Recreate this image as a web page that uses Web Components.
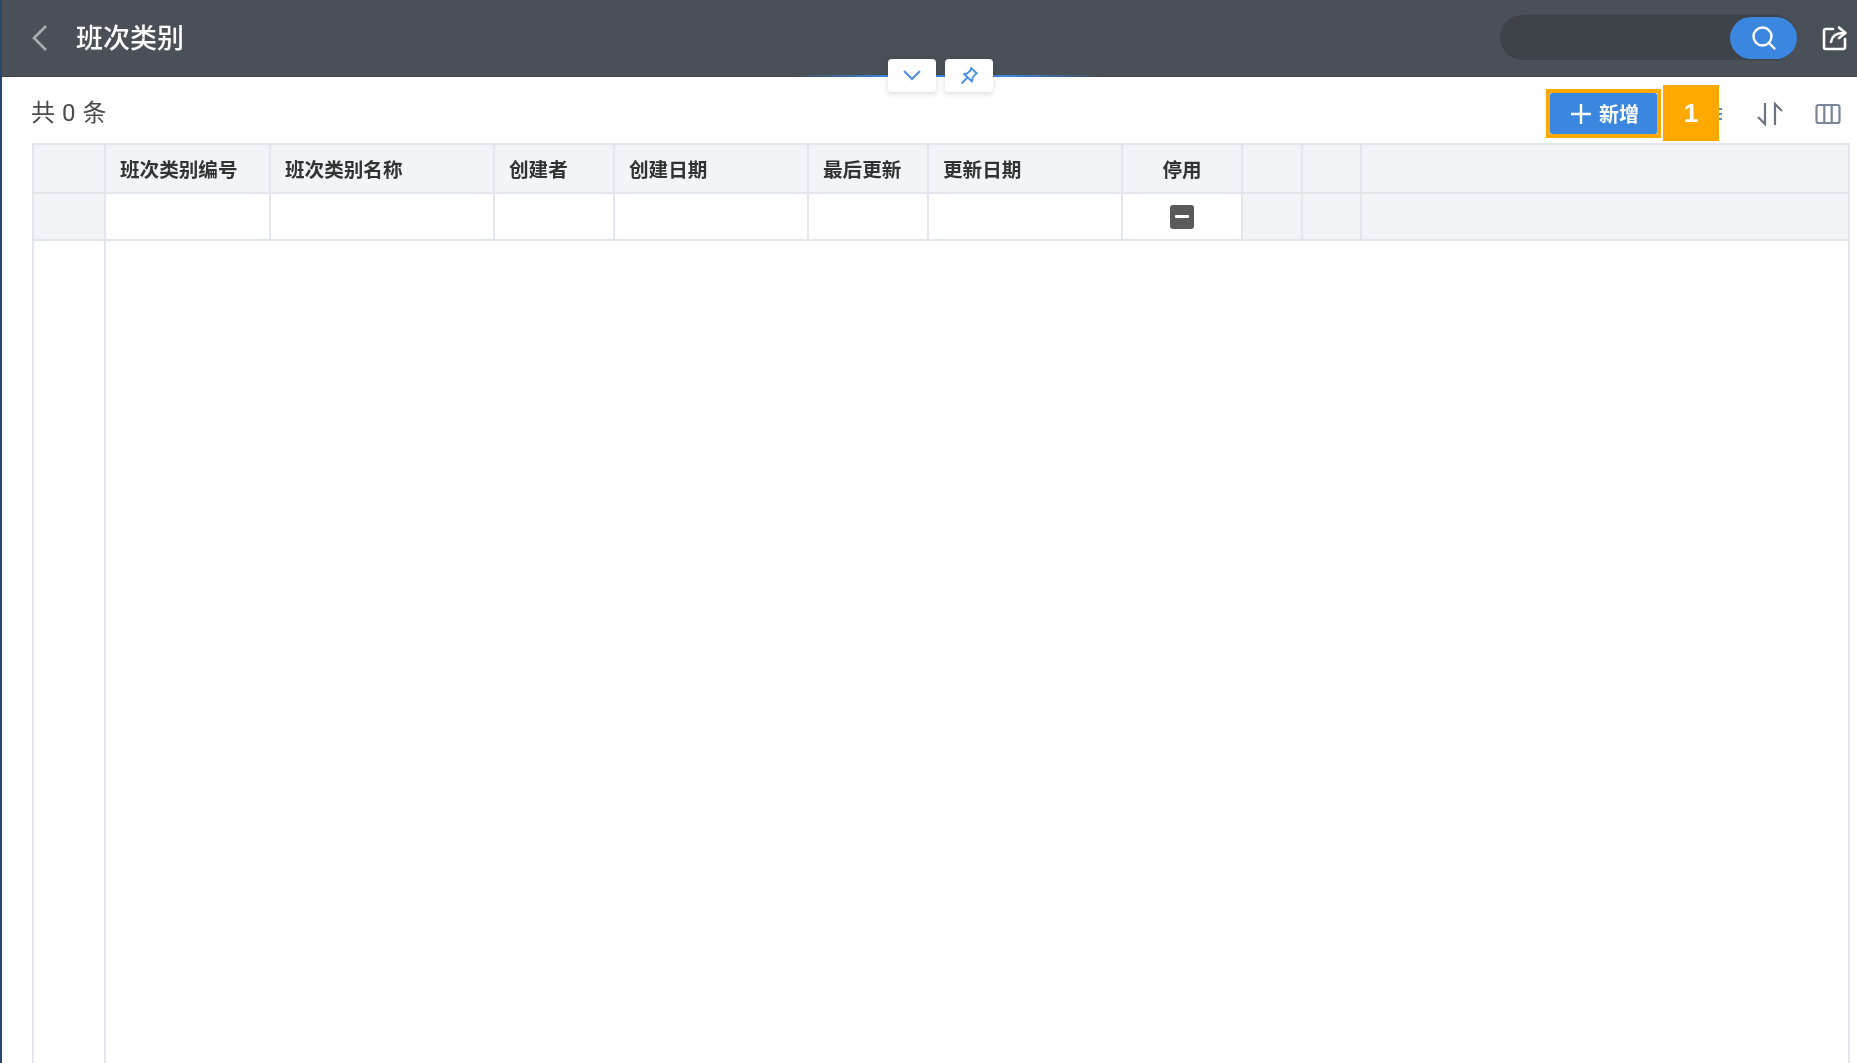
<!DOCTYPE html>
<html lang="zh">
<head>
<meta charset="utf-8">
<title>班次类别</title>
<style>
  html, body { margin: 0; height: 100%; overflow: hidden; background: #fff; }
  body { font-family: "Roboto", "Noto Sans CJK SC", sans-serif; color: #333; }
</style>
</head>
<body>
<app-page>
  <top-bar heading="班次类别"></top-bar>
  <list-toolbar total="0"></list-toolbar>
  <data-grid></data-grid>
</app-page>

<script>
// page shell: dark edge on the left, rows stacked
class AppPage extends HTMLElement {
  constructor() {
    super();
    this.attachShadow({ mode: "open" });
    this.shadowRoot.innerHTML = `
      <style>
        :host { display: flex; flex-direction: column; height: 100vh; box-sizing: border-box;
                border-left: 2px solid #27476b; background: #fff; filter: blur(.45px); }
      </style>
      <slot></slot>`;
  }
}

// header with back arrow, title, search and the collapse handles
class TopBar extends HTMLElement {
  constructor() {
    super();
    this.attachShadow({ mode: "open" });
  }
  connectedCallback() {
    this.shadowRoot.innerHTML = `
      <style>
        :host { display: block; position: relative; flex: none; height: 77px; box-sizing: border-box;
                background: #4a5057; border-bottom: 1px solid #3f444a; }
        .bar { display: flex; align-items: center; height: 75px; padding: 0 9px 0 29px; }
        .back { width: 18px; height: 28px; margin-top: 1px; }
        h1 { margin: 0 0 2px 27px; font: 500 27px/1 "Noto Sans CJK SC", sans-serif; color: #fff; flex: 1; }
        .search { display: flex; justify-content: flex-end; align-items: center; width: 297px; height: 45px;
                  border-radius: 23px; background: #3e4249; }
        .search button { display: flex; align-items: center; justify-content: center; width: 67px; height: 42px;
                  padding: 0; border: 0; border-radius: 21px; background: #3b86de; }
        .share { width: 26px; height: 26px; margin-left: 25px; }
        .line { position: absolute; left: 790px; top: 75px; width: 310px; height: 2px;
                background: linear-gradient(90deg, rgba(59,134,222,0), #3b86de 30%, #3b86de 70%, rgba(59,134,222,0)); }
        .handles { position: absolute; left: 886px; top: 59px; display: flex; gap: 9px; }
        .handles span { display: flex; align-items: center; justify-content: center; width: 48px; height: 33px;
                  background: #fff; border-radius: 4px; box-shadow: 0 2px 6px rgba(0,0,0,.14); }
      </style>
      <div class="bar">
        <svg class="back" viewBox="0 0 18 28" fill="none" stroke="#a9adb1" stroke-width="2.6">
          <path d="M15 2 3 14l12 12"/>
        </svg>
        <h1>${this.getAttribute("heading")}</h1>
        <div class="search">
          <button>
            <svg width="27" height="27" viewBox="0 0 27 27" fill="none" stroke="#fff" stroke-width="2.4" stroke-linecap="round">
              <circle cx="12.5" cy="12.5" r="9"/><path d="m19.5 19.5 5 5"/>
            </svg>
          </button>
        </div>
        <svg class="share" viewBox="0 0 26 26" fill="none" stroke="#fff" stroke-width="2.6" stroke-linejoin="round" stroke-linecap="round">
          <path d="M11 4H4a2 2 0 0 0-2 2v16a2 2 0 0 0 2 2h17a2 2 0 0 0 2-2v-8"/>
          <path d="M9 17c1-6 5-9 12-9"/><path d="M17 2.500 23.500 8 17 13"/>
        </svg>
      </div>
      <div class="line"></div>
      <div class="handles">
        <span>
          <svg width="20" height="12" viewBox="0 0 20 12" fill="none" stroke="#4a90e2" stroke-width="2">
            <path d="m2 1 8 8 8-8"/>
          </svg>
        </span>
        <span>
          <svg width="19" height="19" viewBox="0 0 19 19" fill="none" stroke="#4a90e2" stroke-width="1.800" stroke-linejoin="round" stroke-linecap="round">
            <path d="M11 2 17 7.500 15 8.500 12.500 12 12 15.500 4 8 7 7.500 10.500 4.500Z"/><path d="M7.500 11.500 2 17"/>
          </svg>
        </span>
      </div>`;
  }
}

// count on the left, add button and view icons on the right
class ListToolbar extends HTMLElement {
  constructor() {
    super();
    this.attachShadow({ mode: "open" });
  }
  connectedCallback() {
    this.shadowRoot.innerHTML = `
      <style>
        :host { display: flex; align-items: center; flex: none; height: 66px; box-sizing: border-box;
                padding: 0 16px 7px 29px; position: relative; }
        .count { flex: 1; font: 400 24px/1 "Roboto", "Noto Sans CJK SC", sans-serif; color: #4a4a4a;
                 margin-top: 12px; word-spacing: 1px; }
        add-button { margin-right: 53px; margin-top: 14px; }
        .list { width: 12px; height: 20px; margin-right: 34px; margin-top: 14px; }
        .sort { width: 28px; height: 26px; margin-right: 31px; margin-top: 14px; }
        .cols { width: 26px; height: 22px; margin-top: 14px; }
        .badge { position: absolute; left: 1661px; top: 8px; width: 56px; height: 56px; display: flex;
                 align-items: center; justify-content: center; background: #ffa800; color: #fff;
                 font: 700 26px/1 "Liberation Sans", sans-serif; }
      </style>
      <span class="count">共 ${this.getAttribute("total")} 条</span>
      <add-button>新增</add-button>
      <svg class="list" viewBox="0 0 12 20" fill="none" stroke="#4a90e2" stroke-width="2">
        <path d="M0 5h12M0 10h12M0 15h12"/>
      </svg>
      <svg class="sort" viewBox="0 0 28 26" fill="none" stroke="#6b7480" stroke-width="2.200">
        <path d="M9 2v21L2 16"/><path d="M19 24V3l7 7"/>
      </svg>
      <svg class="cols" viewBox="0 0 26 22" fill="none" stroke="#7a8698" stroke-width="2.200" stroke-linejoin="round">
        <rect x="1.500" y="2" width="23" height="18" rx="2"/><path d="M9.300 2v18M16.700 2v18"/>
      </svg>
      <div class="badge">1</div>`;
  }
}

class AddButton extends HTMLElement {
  constructor() {
    super();
    this.attachShadow({ mode: "open" });
    this.shadowRoot.innerHTML = `
      <style>
        :host { display: inline-block; outline: 4px solid #ffa800; }
        button { display: flex; align-items: center; gap: 7px; width: 107px; height: 41px; box-sizing: border-box;
                 padding: 0 0 0 20px; border: 0; border-radius: 2px; background: #3b86de; color: #fff;
                 font: 700 20px/1 "Noto Sans CJK SC", sans-serif; }
      </style>
      <button>
        <svg width="22" height="22" viewBox="0 0 22 22" fill="none" stroke="#fff" stroke-width="2.400">
          <path d="M11 1v20M1 11h20"/>
        </svg>
        <slot></slot>
      </button>`;
  }
}

// grid table, empty apart from the header and the filter row
class DataGrid extends HTMLElement {
  constructor() {
    super();
    this.attachShadow({ mode: "open" });
  }
  connectedCallback() {
    const cols = [
      ["", 72, "side"], ["班次类别编号", 165], ["班次类别名称", 224], ["创建者", 120], ["创建日期", 194],
      ["最后更新", 120], ["更新日期", 194], ["停用", 120, "center"], ["", 60, "side"], ["", 59, "side"], ["", 0, "side"]
    ];
    const template = cols.map(c => c[1] ? c[1] + "px" : "1fr").join(" ");
    const head = cols.map(c => `<div class="cell head ${c[2] === "center" ? "center" : ""}">${c[0]}</div>`).join("");
    const filter = cols.map(c => {
      if (c[2] === "center") return `<div class="cell center"><check-mixed></check-mixed></div>`;
      return `<div class="cell ${c[2] === "side" ? "shade" : ""}"></div>`;
    }).join("");
    this.shadowRoot.innerHTML = `
      <style>
        :host { display: flex; flex-direction: column; flex: 1; min-height: 0; margin: 0 7px 0 30px;
                border-left: 2px solid #e3e6ec; border-right: 2px solid #e3e6ec; border-top: 2px solid #e3e6ec; }
        .row { display: grid; grid-template-columns: ${template}; flex: none; border-bottom: 2px solid #e3e6ec; }
        .row.top { height: 47px; background: #f2f4f8; }
        .row.second { height: 45px; }
        .cell { display: flex; align-items: center; padding-left: 14px; box-sizing: border-box;
                border-right: 2px solid #e3e6ec; min-width: 0; }
        .cell:last-child { border-right: 0; }
        .head { font: 700 19.600px/1 "Noto Sans CJK SC", sans-serif; color: #333; white-space: nowrap; }
        .center { justify-content: center; padding-left: 0; }
        .shade { background: #f2f4f8; }
        .rest { flex: 1; display: grid; grid-template-columns: 72px 1fr; }
        .rest div:first-child { border-right: 2px solid #e3e6ec; }
      </style>
      <div class="row top">${head}</div>
      <div class="row second">${filter}</div>
      <div class="rest"><div></div><div></div></div>`;
  }
}

class CheckMixed extends HTMLElement {
  constructor() {
    super();
    this.attachShadow({ mode: "open" });
    this.shadowRoot.innerHTML = `
      <style>
        :host { display: flex; align-items: center; justify-content: center; width: 24px; height: 24px;
                border-radius: 3px; background: #5a5a5a; }
        i { display: block; width: 14px; height: 3px; background: #fff; border-radius: 1px; }
      </style>
      <i></i>`;
  }
}

customElements.define("app-page", AppPage);
customElements.define("top-bar", TopBar);
customElements.define("list-toolbar", ListToolbar);
customElements.define("add-button", AddButton);
customElements.define("data-grid", DataGrid);
customElements.define("check-mixed", CheckMixed);
</script>
</body>
</html>
